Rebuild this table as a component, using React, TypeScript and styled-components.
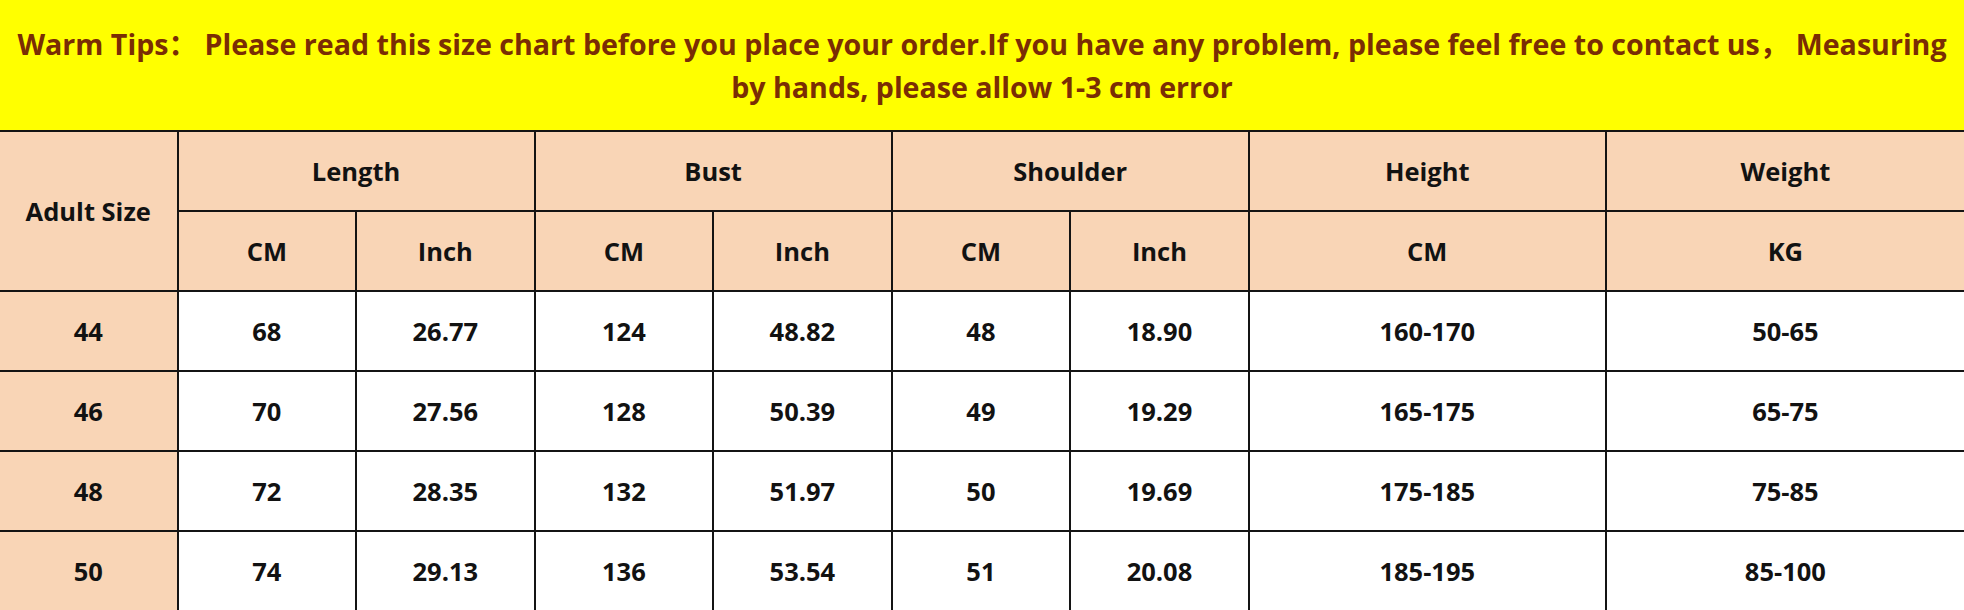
import React from "react";
import styled, { createGlobalStyle } from "styled-components";

const Global = createGlobalStyle`
  html, body { margin: 0; padding: 0; background: #ffffff; }
  body { width: 1964px; overflow: hidden; }
`;

const Page = styled.div`
  width: 1964px;
  display: flex;
  flex-direction: column;
`;

const Banner = styled.div`
  height: 130px;
  box-sizing: border-box;
  background: #ffff00;
  display: flex;
  flex-direction: column;
  align-items: center;
  justify-content: center;
  font-family: "Open Sans", "Noto Sans CJK SC", sans-serif;
  font-weight: 700;
  font-size: 28.6px;
  line-height: 43px;
  color: #7a2d04;
`;

const TipLine = styled.span`
  display: block;
  white-space: nowrap;
  text-align: center;
`;

const Table = styled.table`
  width: 1964px;
  table-layout: fixed;
  border-collapse: separate;
  border-spacing: 0;
  border-top: 2px solid #141414;
  font-family: "Open Sans", "Noto Sans CJK SC", sans-serif;
  font-weight: 700;
  font-size: 25.5px;
  color: #121212;
`;

const Cell = styled.td<{ $head?: boolean; $last?: boolean }>`
  height: 80px;
  box-sizing: border-box;
  padding: 0;
  text-align: center;
  vertical-align: middle;
  background: ${(p) => (p.$head ? "#f9d5b6" : "#ffffff")};
  border-bottom: 2px solid #141414;
  border-right: ${(p) => (p.$last ? "none" : "2px solid #141414")};
  font-weight: 700;
`;

const groups = ["Length", "Bust", "Shoulder"];

const rows = [
  ["44", "68", "26.77", "124", "48.82", "48", "18.90", "160-170", "50-65"],
  ["46", "70", "27.56", "128", "50.39", "49", "19.29", "165-175", "65-75"],
  ["48", "72", "28.35", "132", "51.97", "50", "19.69", "175-185", "75-85"],
  ["50", "74", "29.13", "136", "53.54", "51", "20.08", "185-195", "85-100"],
];

export default function App() {
  return (
    <Page>
      <Global />
      <Banner>
        <TipLine>
          Warm Tips： Please read this size chart before you place your order.If you have any
          problem, please feel free to contact us，{"\u00a0"}Measuring
        </TipLine>
        <TipLine>by hands, please allow 1-3 cm error</TipLine>
      </Banner>
      <Table>
        <colgroup>
          {Array.from({ length: 11 }).map((_, i) => (
            <col key={i} style={{ width: `${100 / 11}%` }} />
          ))}
        </colgroup>
        <tbody>
          <tr>
            <Cell as="th" $head rowSpan={2}>
              Adult Size
            </Cell>
            {groups.map((g) => (
              <Cell as="th" $head colSpan={2} key={g}>
                {g}
              </Cell>
            ))}
            <Cell as="th" $head colSpan={2}>
              Height
            </Cell>
            <Cell as="th" $head colSpan={2} $last>
              Weight
            </Cell>
          </tr>
          <tr>
            {groups.map((g) => (
              <React.Fragment key={g}>
                <Cell as="th" $head>
                  CM
                </Cell>
                <Cell as="th" $head>
                  Inch
                </Cell>
              </React.Fragment>
            ))}
            <Cell as="th" $head colSpan={2}>
              CM
            </Cell>
            <Cell as="th" $head colSpan={2} $last>
              KG
            </Cell>
          </tr>
          {rows.map((r) => (
            <tr key={r[0]}>
              <Cell $head>{r[0]}</Cell>
              {r.slice(1, 7).map((v, i) => (
                <Cell key={i}>{v}</Cell>
              ))}
              <Cell colSpan={2}>{r[7]}</Cell>
              <Cell colSpan={2} $last>
                {r[8]}
              </Cell>
            </tr>
          ))}
        </tbody>
      </Table>
    </Page>
  );
}
